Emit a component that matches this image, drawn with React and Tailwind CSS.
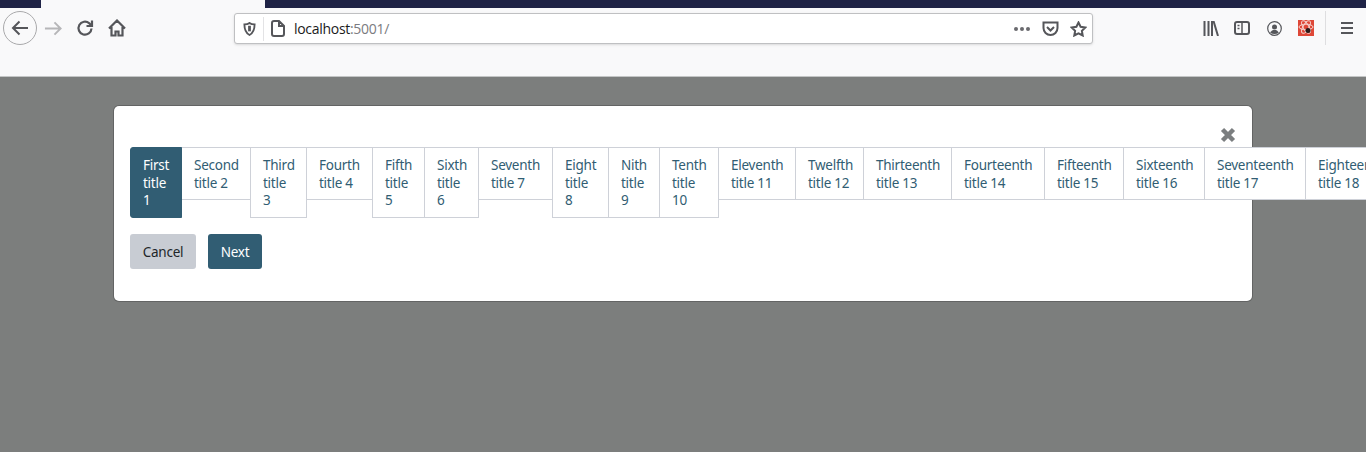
const tabs = [
  ["First", "title", "1", 52],
  ["Second", "title 2", null, 70],
  ["Third", "title", "3", 57],
  ["Fourth", "title 4", null, 67],
  ["Fifth", "title", "5", 53],
  ["Sixth", "title", "6", 55],
  ["Seventh", "title 7", null, 75],
  ["Eight", "title", "8", 57],
  ["Nith", "title", "9", 52],
  ["Tenth", "title", "10", 60],
  ["Eleventh", "title 11", null, 78],
  ["Twelfth", "title 12", null, 69],
  ["Thirteenth", "title 13", null, 89],
  ["Fourteenth", "title 14", null, 94],
  ["Fifteenth", "title 15", null, 80],
  ["Sixteenth", "title 16", null, 82],
  ["Seventeenth", "title 17", null, 102],
  ["Eighteenth", "title 18", null, 93],
];

const Ic = ({ w = 20, h = 20, vb = "0 0 20 20", children, className = "" }) => (
  <svg width={w} height={h} viewBox={vb} fill="none" stroke="#55565a" strokeWidth="2" className={`shrink-0 ${className}`}>
    {children}
  </svg>
);

function Toolbar() {
  return (
    <div className="h-[69px] bg-[#f9f9fa] border-b border-[#c4c6c6] pt-[3px] flex items-start">
      <div className="w-[234px] flex items-center pl-[3px] shrink-0">
        <div className="w-[34px] h-[34px] rounded-full border border-[#a9a9ab] flex items-center justify-center">
          <Ic><path d="M18 10H3M9.500 3.500 3 10l6.500 6.500" /></Ic>
        </div>
        <div className="ml-[7px]">
          <Ic w={19} h={19}><path d="M1 10h16M11 3.500 17.500 10 11 16.500" stroke="#b6b6b8" /></Ic>
        </div>
        <div className="ml-[13px]">
          <Ic w={18} h={18} vb="0 0 18 18"><path d="M15.500 9.500a6.500 6.500 0 1 1-2.200-5.200L15.800 7M16 1.500V7h-5.500" strokeWidth="2.200" /></Ic>
        </div>
        <div className="ml-[14px]">
          <Ic w={18} h={18} vb="0 0 18 18"><path d="M1 9.500 9 1.500 17 9.500M3.500 8v8.500h4v-4h3v4h4V8" strokeWidth="2.200" /></Ic>
        </div>
      </div>
      <div className="w-[859px] h-[31px] mt-[2px] bg-white border border-[#bfc0c2] rounded-[3px] shadow-sm flex items-center pl-[8px] pr-[5px]">
        <Ic w={13} h={14} vb="0 0 14 15"><path d="M1.500 2.500C5 2.500 7 1 7 1s2 1.500 5.500 1.500c0 6-1.500 9.500-5.500 11.500C3 12 1.500 8.500 1.500 2.500Z" /><path d="M7 4v6" strokeWidth="3" /></Ic>
        <div className="w-px h-[24px] bg-[#e3e3e5] ml-[7px]" />
        <div className="ml-[7px]">
          <Ic w={14} h={17} vb="0 0 14 17"><path d="M1 3a2 2 0 0 1 2-2h5l5 5v8a2 2 0 0 1-2 2H3a2 2 0 0 1-2-2ZM8 1v5h5" /></Ic>
        </div>
        <span className="ml-[9px] text-[14px] text-[#1a1a1c] font-['Open_Sans',sans-serif] tracking-[-0.3px]">
          localhost<span className="text-[#7b7b80]">:5001/</span>
        </span>
        <div className="flex-1" />
        <div className="flex gap-[2px]">
          <div className="w-[4px] h-[4px] rounded-full bg-[#6a6a6e]" />
          <div className="w-[4px] h-[4px] rounded-full bg-[#6a6a6e]" />
          <div className="w-[4px] h-[4px] rounded-full bg-[#6a6a6e]" />
        </div>
        <div className="ml-[12px]">
          <Ic w={17} h={16} vb="0 0 17 16"><path d="M1.500 1.500h14V7a7 7 0 0 1-14 0Z" /><path d="m5 6 3.500 3.500L12 6" /></Ic>
        </div>
        <div className="ml-[11px]">
          <Ic w={17} h={16} vb="0 0 17 16"><path d="M8.500 1.500 10.600 5.800l4.700.7-3.400 3.300.8 4.700-4.200-2.200-4.200 2.200.8-4.700L1.700 6.500l4.700-.7Z" /></Ic>
        </div>
      </div>
      <div className="flex-1 flex items-center h-[34px] pl-[110px]">
        <Ic w={16} h={15} vb="0 0 16 15"><path d="M1.500 0v15M5.500 0v15M9 0v15M10.500 0l4.500 15" /></Ic>
        <div className="ml-[15px]">
          <Ic w={16} h={14} vb="0 0 16 14"><rect x="1" y="1" width="14" height="12" rx="2" /><path d="M8 1v12M3.500 4.500h2M3.500 7.500h2" strokeWidth="1.500" /></Ic>
        </div>
        <div className="ml-[17px]">
          <Ic w={15} h={15} vb="0 0 15 15"><circle cx="7.500" cy="7.500" r="6.800" strokeWidth="1.200" /><circle cx="7.500" cy="6" r="2.500" fill="#55565a" stroke="none" /><path d="M3.200 11.800c1-2.300 2.500-2.800 4.300-2.800s3.300.5 4.300 2.800c-2.500 1.700-6 1.700-8.600 0Z" fill="#55565a" stroke="none" /></Ic>
        </div>
        <div className="ml-[16px] w-[16px] h-[16px] bg-[#de4737] flex items-center justify-center">
          <svg width="16" height="16" viewBox="0 0 16 16" fill="none" stroke="#f6d3ce" strokeWidth="1">
            <ellipse cx="8" cy="7" rx="7" ry="2.800" />
            <ellipse cx="8" cy="7" rx="7" ry="2.800" transform="rotate(60 8 7)" />
            <ellipse cx="8" cy="7" rx="7" ry="2.800" transform="rotate(120 8 7)" />
            <circle cx="10" cy="10.500" r="2.500" fill="#2a1a1a" stroke="none" />
          </svg>
        </div>
        <div className="ml-[11px] w-px h-[34px] bg-[#dedee0]" />
        <div className="ml-[15px]">
          <Ic w={12} h={12} vb="0 0 12 12"><path d="M0 1h12M0 6h12M0 11h12" /></Ic>
        </div>
      </div>
    </div>
  );
}

export default function App() {
  return (
    <div className="w-[1366px] h-[452px] overflow-hidden bg-[#7c7e7d] font-['Noto_Sans',sans-serif]">
      <div className="h-[8px] bg-[#1f2346] flex pl-[41px]">
        <div className="w-[224px] bg-[#f9f9fa]" />
      </div>
      <Toolbar />
      <div className="mt-[29px] ml-[114px] w-[1138px] h-[195px] bg-white rounded-[5px] shadow-[0_0_0_1px_rgba(0,0,0,0.2)] pt-[18px] pl-[16px] relative">
        <div className="h-[23px] flex justify-end pr-[16px]">
          <svg width="16" height="16" viewBox="0 0 16 16" className="mt-[3px]">
            <path d="M2.500 2.500l11 11M13.500 2.500l-11 11" stroke="#7b7e80" strokeWidth="4.500" />
          </svg>
        </div>
        <div className="flex items-start w-max text-[13.5px] tracking-[-0.25px] leading-[17.500px]">
          {tabs.map((t, i) => {
            const active = i === 0;
            const three = t[2] !== null;
            return (
              <div
                key={t[0]}
                style={{ width: t[3] }}
                className={`shrink-0 border pt-[9px] pl-[12px] ${three ? "h-[71px]" : "h-[53px]"} ${
                  active
                    ? "bg-[#315d73] border-[#315d73] text-white rounded-l-[3px] relative z-10"
                    : "bg-white text-[#315d73] border-[#ced1d8] -ml-px"
                }`}
              >
                <div className="whitespace-nowrap">{t[0]}</div>
                <div className="whitespace-nowrap">{t[1]}</div>
                {three && <div className="whitespace-nowrap">{t[2]}</div>}
              </div>
            );
          })}
        </div>
        <div className="mt-[16px] flex gap-[12px] text-[13.5px] tracking-[-0.25px]">
          <button className="w-[66px] h-[35px] pt-[1px] bg-[#c8ccd3] text-[#212529] rounded-[3px]">Cancel</button>
          <button className="w-[54px] h-[35px] pt-[1px] bg-[#315d73] text-white rounded-[3px]">Next</button>
        </div>
      </div>
    </div>
  );
}
